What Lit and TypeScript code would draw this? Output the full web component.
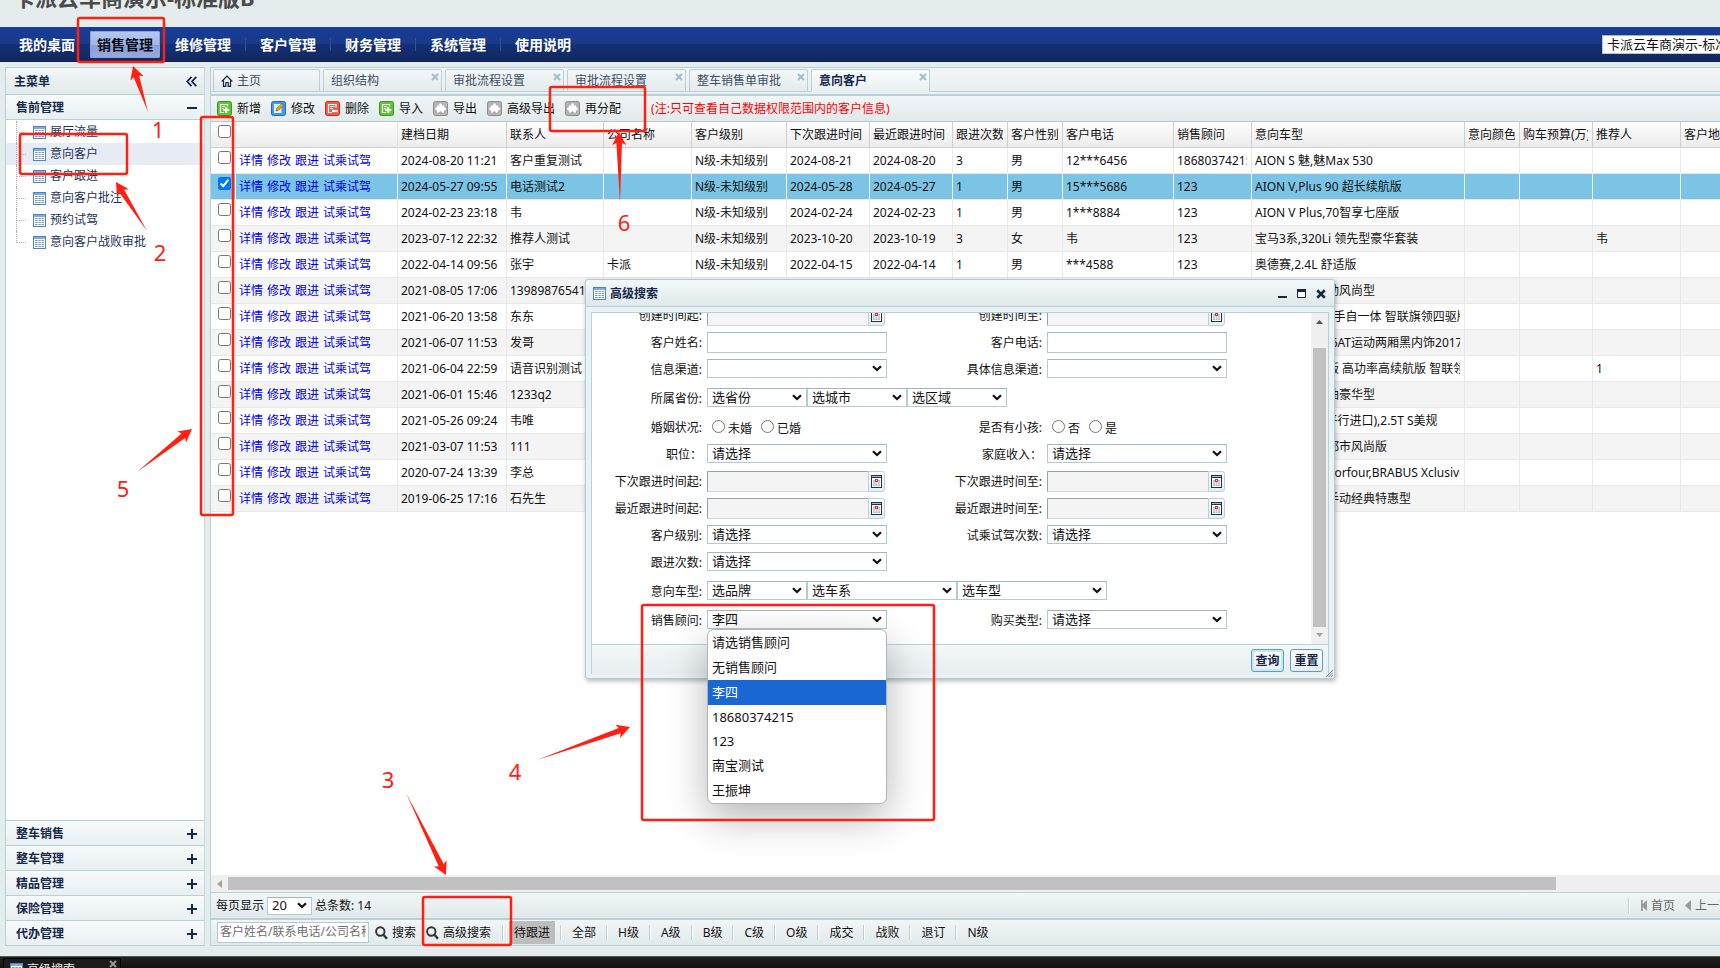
import { LitElement, html, css, svg, nothing } from "lit";
import { customElement, state } from "lit/decorators.js";
import { classMap } from "lit/directives/class-map.js";

type IconName = "add" | "edit" | "del" | "gear";

const NAV = ["我的桌面", "销售管理", "维修管理", "客户管理", "财务管理", "系统管理", "使用说明"];
const TREE = ["展厅流量", "意向客户", "客户跟进", "意向客户批注", "预约试驾", "意向客户战败审批"];
const GROUPS = ["整车销售", "整车管理", "精品管理", "保险管理", "代办管理"];
const TABS = ["组织结构", "审批流程设置", "审批流程设置", "整车销售单审批", "意向客户"];
const TOOLS: [IconName, string][] = [
  ["add", "新增"],
  ["edit", "修改"],
  ["del", "删除"],
  ["add", "导入"],
  ["gear", "导出"],
  ["gear", "高级导出"],
  ["gear", "再分配"],
];
const FILTERS = ["全部", "H级", "A级", "B级", "C级", "O级", "成交", "战败", "退订", "N级"];

const COLS: [string, number][] = [
  ["", 25],
  ["", 162],
  ["建档日期", 109],
  ["联系人", 97],
  ["公司名称", 88],
  ["客户级别", 95],
  ["下次跟进时间", 83],
  ["最近跟进时间", 83],
  ["跟进次数", 55],
  ["客户性别", 55],
  ["客户电话", 111],
  ["销售顾问", 78],
  ["意向车型", 213],
  ["意向颜色", 55],
  ["购车预算(万)", 73],
  ["推荐人", 88],
  ["客户地址", 120],
];
const TABLE_WIDTH = COLS.reduce((sum, col) => sum + col[1], 0);

const L = "N级-未知级别";
const ROWS: string[][] = [
  ["2024-08-20 11:21", "客户重复测试", "", L, "2024-08-21", "2024-08-20", "3", "男", "12***6456", "18680374215", "AION S 魅,魅Max 530", ""],
  ["2024-05-27 09:55", "电话测试2", "", L, "2024-05-28", "2024-05-27", "1", "男", "15***5686", "123", "AION V,Plus 90 超长续航版", ""],
  ["2024-02-23 23:18", "韦", "", L, "2024-02-24", "2024-02-23", "1", "男", "1***8884", "123", "AION V Plus,70智享七座版", ""],
  ["2023-07-12 22:32", "推荐人测试", "", L, "2023-10-20", "2023-10-19", "3", "女", "韦", "123", "宝马3系,320Li 领先型豪华套装", "韦"],
  ["2022-04-14 09:56", "张宇", "卡派", L, "2022-04-15", "2022-04-14", "1", "男", "***4588", "123", "奥德赛,2.4L 舒适版", ""],
  ["2021-08-05 17:06", "13989876541", "", "", "", "", "", "", "", "", "大众新朗逸自动风尚型", ""],
  ["2021-06-20 13:58", "东东", "", "", "", "", "", "", "", "", "新哈弗H6,2.0T手自一体 智联旗领四驱版", ""],
  ["2021-06-07 11:53", "发哥", "", "", "", "", "", "", "", "", "马自达3,2.0L, 6AT运动两厢黑内饰2017款", ""],
  ["2021-06-04 22:59", "语音识别测试", "", "", "", "", "", "", "", "", "小鹏汽车标准版 高功率高续航版 智联领航", "1"],
  ["2021-06-01 15:46", "1233q2", "", "", "", "", "", "", "", "", "福特新锐界汽油豪华型", ""],
  ["2021-05-26 09:24", "韦唯", "", "", "", "", "", "", "", "", "丰田凯美瑞3(平行进口),2.5T S美规", ""],
  ["2021-03-07 11:53", "111", "", "", "", "", "", "", "", "", "大众新桑塔纳都市风尚版", ""],
  ["2020-07-24 13:39", "李总", "", "", "", "", "", "", "", "", "新奔驰,smart forfour,BRABUS Xclusive", ""],
  ["2019-06-25 17:16", "石先生", "", "", "", "", "", "", "", "", "五菱宏光标准手动经典特惠型", ""],
];

type Field =
  | { label: string; kind: "date" | "text" }
  | { label: string; kind: "select"; values: [string, number][] }
  | { label: string; kind: "radio"; values: string[] };

const sel = (label: string, value = "请选择"): Field => ({ label, kind: "select", values: [[value, 180]] });

const FORM: { tall?: boolean; fields: Field[] }[] = [
  { fields: [{ label: "创建时间起:", kind: "date" }, { label: "创建时间至:", kind: "date" }] },
  { fields: [{ label: "客户姓名:", kind: "text" }, { label: "客户电话:", kind: "text" }] },
  { fields: [sel("信息渠道:", ""), sel("具体信息渠道:", "")] },
  { tall: true, fields: [{ label: "所属省份:", kind: "select", values: [["选省份", 100], ["选城市", 100], ["选区域", 100]] }] },
  {
    tall: true,
    fields: [
      { label: "婚姻状况:", kind: "radio", values: ["未婚", "已婚"] },
      { label: "是否有小孩:", kind: "radio", values: ["否", "是"] },
    ],
  },
  { fields: [sel("职位："), sel("家庭收入：")] },
  { fields: [{ label: "下次跟进时间起:", kind: "date" }, { label: "下次跟进时间至:", kind: "date" }] },
  { fields: [{ label: "最近跟进时间起:", kind: "date" }, { label: "最近跟进时间至:", kind: "date" }] },
  { fields: [sel("客户级别:"), sel("试乘试驾次数:")] },
  { fields: [sel("跟进次数:")] },
  { tall: true, fields: [{ label: "意向车型:", kind: "select", values: [["选品牌", 100], ["选车系", 150], ["选车型", 150]] }] },
  { tall: true, fields: [sel("销售顾问:", "李四"), sel("购买类型:")] },
];
const CONSULTANTS = ["请选销售顾问", "无销售顾问", "李四", "18680374215", "123", "南宝测试", "王振坤"];

const chevron = html`<svg class="chev" width="10" height="7" viewBox="0 0 10 7" aria-hidden="true">
  <path d="M1 1.2 5 5 9 1.2" fill="none" stroke="#111" stroke-width="2.2" />
</svg>`;

const gridIcon = html`<svg width="13" height="13" viewBox="0 0 13 13" aria-hidden="true">
  <rect x=".5" y=".5" width="12" height="12" fill="#fff" stroke="#4f83c8" />
  <path d="M1 1h11v2H1z" fill="#7fabe2" />
  <path d="M2 4.5h2.6M5.4 4.5h2.4M8.6 4.5H11M2 6.5h2.6M5.4 6.5h2.4M8.6 6.5H11M2 8.5h2.6M5.4 8.5h2.4M8.6 8.5H11M2 10.5h2.6M5.4 10.5h2.4M8.6 10.5H11" stroke="#7699c8" />
</svg>`;

const calendarIcon = html`<svg width="11" height="13" viewBox="0 0 11 13" aria-hidden="true">
  <rect x=".5" y=".5" width="10" height="12" fill="#fff" stroke="#1b3355" />
  <path d="M0 0h11v3H0z" fill="#1b3355" />
  <path d="M1 1.5h9" stroke="#9fc0d0" />
  <path d="M2 5h7v6H2z" fill="#a9bcc6" />
  <path d="M4.3 5v6M6.7 5v6M2 7h7M2 9h7" stroke="#fff" stroke-width=".6" />
  <path d="M4 4h3v3H4z" fill="#ff1f1f" /><path d="M5 5h1v1H5z" fill="#fff" />
</svg>`;

const magnifier = html`<svg width="13" height="14" viewBox="0 0 13 14" aria-hidden="true">
  <circle cx="5.3" cy="5.5" r="4.2" fill="none" stroke="#333" stroke-width="1.9" />
  <path d="m8.4 8.8 3.6 4" stroke="#333" stroke-width="2.4" />
</svg>`;

const TOOL_FILL: Record<IconName, [string, string]> = {
  add: ["#5fc43a", "#2f9a12"],
  edit: ["#3f9cf0", "#1769c8"],
  del: ["#ee5a4e", "#c8281e"],
  gear: ["#b4b4b4", "#8c8c8c"],
};

function toolIcon(name: IconName) {
  const [fill, stroke] = TOOL_FILL[name];
  const glyph = {
    add: svg`<path d="M10.5 5.2V3.5h-7v8h3.5" fill="none" stroke="#fff" stroke-width="1.2"/><path d="M5 5.5h3M5 7.5h2" stroke="#fff"/><path d="M9.3 6v6M6.3 9h6" stroke="#fff" stroke-width="2"/>`,
    edit: svg`<path d="M3 3h7.5v9H3z" fill="#e8f3ff"/><path d="m5 10 .6-2.4L10.8 2.4l1.8 1.8L7.4 9.4z" fill="#f0a020" stroke="#7a5410" stroke-width=".6"/>`,
    del: svg`<path d="M11 6.5V3.5H3.5v8H7" fill="none" stroke="#fff" stroke-width="1.2"/><path d="M5 5.5h4.5M5 7.5h3" stroke="#fff"/><path d="M7 10h5.5" stroke="#fff" stroke-width="2.2"/>`,
    gear: svg`<path d="M4 4.2h7v7.3H4z" fill="#fff"/><circle cx="7.5" cy="3.8" r="1.5" fill="#fff"/><circle cx="3.6" cy="7.8" r="1.5" fill="#fff"/><circle cx="11.4" cy="7.8" r="1.5" fill="#fff"/><circle cx="7.5" cy="11.5" r="1.2" fill="#a6a6a6"/><path d="M5.8 4.2v1M9.2 4.2v1" stroke="#a6a6a6" stroke-width=".7"/>`,
  }[name];
  return html`<svg width="15" height="15" viewBox="0 0 15 15" aria-hidden="true">
    <rect x=".5" y=".5" width="14" height="14" rx="2" fill=${fill} stroke=${stroke} />${glyph}
  </svg>`;
}

/* Tapered arrow: a point at the tail that widens up to the head. */
function arrow([tx, ty, sx, sy]: number[]) {
  const len = Math.hypot(tx - sx, ty - sy);
  const ux = (tx - sx) / len;
  const uy = (ty - sy) / len;
  const at = (back: number, side: number) =>
    `${(tx - ux * back - uy * side).toFixed(1)},${(ty - uy * back + ux * side).toFixed(1)}`;
  const points = [at(0, 0), at(13, 7), at(11, 2.8), `${sx},${sy}`, at(11, -2.8), at(13, -7)].join(" ");
  return svg`<polygon points=${points} fill="#ff2012"/>`;
}

const MARK_BOXES = [
  [78, 18, 86, 44],
  [20, 134, 107, 40],
  [201, 117, 32, 398],
  [550, 87, 95, 44],
  [423, 897, 88, 48],
  [642, 605, 292, 215],
];
const MARK_ARROWS = [
  [133, 66, 148, 112],
  [116, 182, 147, 231],
  [446, 875, 406, 793],
  [630, 727, 537, 760],
  [192, 429, 137, 472],
  [619, 132, 620, 203],
];
const MARK_TEXT: [string, number, number][] = [
  ["1", 158, 138],
  ["2", 160, 261],
  ["3", 388, 788],
  ["4", 515, 780],
  ["5", 123, 497],
  ["6", 624, 231],
];

@customElement("app-root")
export class AppRoot extends LitElement {
  @state() private selected = 1;

  static styles = css`
    :host {
      display: block;
      position: relative;
      height: 100vh;
      overflow: hidden;
      background: #e5ecee;
      color: #111;
      font: 12px/18px "Noto Sans", "Noto Sans CJK SC", sans-serif;
    }
    * { box-sizing: border-box; }
    button, input, select { font: inherit; color: inherit; margin: 0; }
    button { border: 0; background: none; padding: 0; white-space: nowrap; }
    svg { display: block; flex: none; }
    .page { display: flex; flex-direction: column; height: 100%; }
    .brand { height: 27px; flex: none; overflow: hidden; }
    .brand h1 { margin: -19px 0 0 13px; font-size: 22px; line-height: 32px; font-weight: 700; color: #4b4b4b; }
    .nav {
      display: flex; align-items: center; height: 35px; flex: none; padding-left: 12px;
      background: linear-gradient(#173d9c, #1a3a86 48%, #14307a 50%, #12275c);
      border-bottom: 1px solid #0e1d55;
    }
    .nav button { width: 70px; height: 27px; font-size: 14px; line-height: 27px; font-weight: 700; color: #fff; text-align: center; border-radius: 2px; }
    .nav .on { margin: 0 8px; color: #0a0a14; background: linear-gradient(#b4caf4, #a3b6e4 50%, #8d9fd4 52%, #96a8dc); box-shadow: inset 0 0 0 1px #8ea0d6; }
    .nav .sep { width: 1px; height: 13px; margin: 0 7px; background: #33508f; }
    .org { margin: 0 -82px 0 auto; }
    .cell { display: inline-grid; align-items: center; }
    .cell > * { grid-area: 1 / 1; }
    .chev { justify-self: end; margin-right: 5px; pointer-events: none; }
    select { appearance: none; width: 100%; height: 19px; font-size: 13px; line-height: 15px; padding: 0 16px 0 4px; background: #fff; border: 1px solid #b0cbd3; border-top-color: #9db8c0; border-radius: 0; outline: 0; }
    .org select { width: 200px; }

    .work { display: flex; flex: 1; min-height: 0; gap: 5px; padding: 5px 0 10px 5px; }
    .side { width: 200px; flex: none; display: flex; flex-direction: column; background: #fff; border: 1px solid #b8d0d6; border-right-color: #c5d9de; color: #15284b; }
    .bar { display: flex; align-items: center; justify-content: space-between; height: 25px; padding: 1px 7px 0 10px; font-weight: 700; background: linear-gradient(#f7fafb, #e9f0f1); border-bottom: 1px solid #b8d0d6; width: 100%; }
    .side > .head { height: 27px; padding-left: 8px; background: linear-gradient(#f2f6f7, #e2eaec); }
    .side .tree { flex: 1; list-style: none; margin: 0; padding: 1px 0 0; min-height: 0; }
    .tree li { height: 22px; display: grid; grid-template-columns: 10px 1fr; padding-left: 10px; }
    .tree .twig { border-left: 1px dotted #aab; background: linear-gradient(90deg, #b5b5b5 1px, transparent 1px) 0 11px / 2px 1px repeat-x; }
    .tree li:last-child .twig { height: 12px; }
    .tree a { display: flex; align-items: center; gap: 4px; padding-left: 7px; color: #1c3358; text-decoration: none; line-height: 22px; }
    .tree .on { background: #e6ebf4; }
    .tail .bar { border-bottom: 0; border-top: 1px solid #b8d0d6; }

    .main { flex: 1; min-width: 0; display: flex; flex-direction: column; border: 1px solid #b8d0d6; border-right: 0; background: #fff; }
    .tabs { display: flex; gap: 3px; align-items: flex-end; height: 24px; padding-left: 2px; flex: none; background: linear-gradient(#f1f5f7, #e9eef1); box-shadow: inset 0 -1px #b8d0d6; }
    .tab { display: flex; justify-content: space-between; width: 119px; height: 23px; padding: 0 0 0 7px; border: 1px solid #b8d0d6; border-radius: 2px 2px 0 0; background: linear-gradient(#f3f7f8, #e3ebed); color: #3c4e62; line-height: 21px; }
    .tab button { line-height: 21px; }
    .tab .x { align-self: flex-start; padding: 3px 2px; }
    .tab.home { width: 107px; }
    .tab.home button { display: flex; align-items: center; gap: 4px; }
    .tab.on { border-bottom-color: #eaf0f2; background: linear-gradient(#fafcfc, #eaf0f2); font-weight: 700; color: #15284b; }
    .under { height: 4px; flex: none; background: #eaf0f2; border-bottom: 2px solid #b8d0d6; }
    .tools { display: flex; align-items: center; gap: 10px; height: 26px; flex: none; padding: 0 6px; background: linear-gradient(#f1f6f7, #e1e9ea); border-bottom: 1px solid #b8c8cc; }
    .tools button { display: flex; align-items: center; gap: 5px; }
    .note { color: #ff0000; margin-left: 20px; white-space: nowrap; }

    .gridwrap { flex: 1; min-height: 0; overflow: hidden; }
    table { table-layout: fixed; border-collapse: separate; border-spacing: 0; }
    th, td { height: 26px; padding: 0 4px 0 3px; white-space: nowrap; text-align: left; font-weight: 400; border-right: 1px solid #e9e9e9; border-bottom: 1px solid #e9e9e9; }
    .clip { overflow: hidden; }
    th { background: linear-gradient(#fdfdfd, #ececec); border-color: #cfcfcf; }
    th:first-child, th:nth-child(2) { border-right-color: #e4e4e4; }
    td:first-child, th:first-child { vertical-align: top; padding: 3px 0 0 7px; }
    tr:nth-child(even) td { background: #f4f4f4; }
    tbody .sel td { background: #7bc4e5; border-right-color: #eef5f8; }
    td input, th input { display: block; width: 13px; height: 13px; }
    .acts { display: flex; gap: 4px; }
    .acts a { color: #0000ee; text-decoration: none; }

    .hscroll { height: 17px; flex: none; display: flex; align-items: center; background: #f0f0f0; padding: 0 164px 0 6px; }
    .hscroll .thumb { height: 13px; flex: 1; margin-left: 6px; background: #c1c1c1; }
    .pager { display: flex; align-items: center; height: 28px; flex: none; padding-left: 5px; background: linear-gradient(#f1f6f7, #e1e9ea); border-top: 1px solid #b8d0d6; border-bottom: 2px solid #b8d0d6; white-space: nowrap; }
    .pager .cell { width: 45px; margin: 0 3px; }
    .pager select { height: 18px; }
    .pages { display: flex; align-items: center; margin-left: auto; width: 92px; overflow: hidden; color: #666; }
    .pages button { display: flex; align-items: center; gap: 4px; margin-right: 10px; }
    .sep2 { width: 2px; height: 15px; flex: none; background: linear-gradient(90deg, #b8d0d6 50%, #fff 50%); }
    .pages .sep2 { margin-right: 11px; }
    .find { display: flex; align-items: center; height: 25px; flex: none; padding-left: 6px; background: linear-gradient(#f1f6f7, #e1e9ea); }
    .find input { width: 152px; height: 21px; padding: 0 2px 2px; border: 1px solid #b0cbd3; outline: 0; background: #fff; border-radius: 0; }
    .find input::placeholder { color: #707070; opacity: 1; }
    .find button { display: flex; align-items: center; gap: 4px; }
    .find .go { margin-left: 6px; margin-right: 4px; }
    .find .adv { margin-right: 11px; }
    .find .opt { padding: 0 10px; height: 22px; }
    .find .pend { margin: 0 5px; padding: 0 5px; width: 46px; height: 23px; background: #bdbdbd; justify-content: center; }

    .dock { height: 12px; flex: none; background: linear-gradient(#222, #111); border-top: 1px solid #555; padding: 1px 0 0 3px; overflow: hidden; }
    .dock button { display: flex; align-items: flex-start; gap: 4px; width: 118px; height: 24px; padding: 4px 3px 0 6px; color: #eee; background: #1c1c1c; border: 1px solid #000; border-radius: 2px; line-height: 14px; }
    .dock .x { margin: -3px 0 0 auto; }

    .dialog { position: absolute; left: 585px; top: 279px; width: 750px; display: flex; flex-direction: column; background: #e9f2f4; border: 1px solid #b0cdd6; border-radius: 3px; box-shadow: 1px 2px 5px rgba(0, 0, 0, .3); }
    .dialog header { display: flex; align-items: center; gap: 4px; height: 27px; padding: 1px 8px 0 7px; font-weight: 700; color: #15284b; background: linear-gradient(#f4f8f9, #dfe8ea); border-bottom: 1px solid #b8d0d6; border-radius: 3px 3px 0 0; }
    .dialog header h2 { margin: 0 auto 0 0; font: inherit; }
    .dialog header button { margin-left: 6px; }
    .shell { margin: 5px 5px 4px; border: 1px solid #b8d0d6; border-bottom: 0; display: grid; grid-template-columns: 1fr 17px; }
    .scroll { height: 331px; overflow: hidden; background: #fff; }
    .rows { margin-top: -11px; }
    .row { display: grid; grid-template-columns: 110px 230px 110px 1fr; column-gap: 0; height: 27px; padding-top: 3px; }
    .row.tall { height: 29px; padding-top: 5px; }
    .row .cap { text-align: right; line-height: 21px; white-space: nowrap; }
    .row .wide { grid-column: 2 / -1; }
    .ctl { display: flex; align-items: flex-start; padding-left: 5px; }
    .txt { width: 180px; height: 21px; border: 1px solid #b0cbd3; border-top-color: #9db8c0; background: #fff; outline: 0; border-radius: 0; }
    .date { width: 161px; height: 21px; border: 1px solid #d3d9dc; border-top-color: #98a4ac; border-left-color: #98a4ac; border-right: 0; background: #f4f4f4; outline: 0; border-radius: 0; }
    .cal { width: 17px; height: 21px; display: grid; place-content: center; border: 1px solid #b8d0d6; border-radius: 0 3px 3px 0; background: linear-gradient(#fff, #e6eef1); }
    .ctl.radios { padding: 3px 0 0 10px; }
    .radios label { display: flex; gap: 3px; margin-right: 9px; line-height: 18px; }
    .radios input { width: 13px; height: 13px; }
    .vscroll { display: flex; flex-direction: column; align-items: center; justify-content: space-between; background: #f0f0f0; padding: 7px 2px 7px; }
    .vscroll .thumb { flex: 1; width: 13px; margin: 24px 0 6px; background: #c1c1c1; }
    .foot { grid-column: 1 / -1; height: 30px; display: flex; justify-content: flex-end; align-items: center; gap: 6px; padding: 2px 5px 0 0; border-top: 1px solid #b8d0d6; background: linear-gradient(#f3f7f8, #e7edf1); }
    .foot button { width: 33px; height: 23px; border: 1px solid #5b9fbb; border-radius: 3px; background: linear-gradient(#fff, #e6edf3); color: #15284b; font-weight: 700; line-height: 19px; }
    .foot .def { box-shadow: inset 0 0 0 2px #c4ebf5; }
    .grip { position: absolute; right: 1px; bottom: 1px; }
    .menu { position: absolute; left: 708px; top: 630px; width: 178px; margin: 0; padding: 0; list-style: none; background: #fff; border-radius: 6px; overflow: hidden; font-size: 13px; }
    .menushadow { position: absolute; left: 708px; top: 630px; width: 178px; height: 173px; border-radius: 6px; box-shadow: 0 0 0 1px #b4b4b4, 0 14px 40px rgba(0, 0, 0, .3); }
    .menu li { height: 25px; line-height: 25px; padding: 0 4px; }
    .menu .num { height: 24px; line-height: 24px; }
    .menu .on { background: #1967d2; color: #fff; }
    .marks { position: absolute; left: 0; top: 0; width: 100%; height: 100%; pointer-events: none; }
    .marks text { font-size: 22px; fill: #ff2012; text-anchor: middle; }
  `;

  private select(id: string, value: string, width?: number) {
    return html`<span class="cell" style=${width ? `width:${width}px` : nothing}>
      <select id=${id}><option>${value}</option></select>${chevron}
    </span>`;
  }

  private field(f: Field, id: string) {
    if (f.kind === "radio") {
      return html`<span class="cap">${f.label}</span>
        <div class="ctl radios" role="radiogroup" aria-label=${f.label}>
          ${f.values.map((v) => html`<label><input type="radio" name=${id} />${v}</label>`)}
        </div>`;
    }
    const cap = html`<label class="cap" for=${f.kind === "select" ? id + "-0" : id}>${f.label}</label>`;
    if (f.kind === "select") {
      return html`${cap}
        <div class=${classMap({ ctl: true, wide: f.values.length > 1 })}>
          ${f.values.map(([v, w], i) => this.select(`${id}-${i}`, v, w))}
        </div>`;
    }
    return f.kind === "text"
      ? html`${cap}<div class="ctl"><input class="txt" id=${id} type="text" /></div>`
      : html`${cap}<div class="ctl"><input class="date" id=${id} type="text" readonly /><button class="cal" aria-label="日期">${calendarIcon}</button></div>`;
  }

  private cross(color: string, size = 7) {
    return html`<svg width=${size} height=${size} viewBox="0 0 8 8" aria-hidden="true">
      <path d="m1 1 6 6M7 1 1 7" stroke=${color} stroke-width="2" />
    </svg>`;
  }

  private sign(plus: boolean) {
    return html`<svg width="10" height="10" viewBox="0 0 10 10" aria-hidden="true">
      <path d=${plus ? "M0 5h10M5 0v10" : "M0 5h10"} stroke="#15284b" stroke-width="2" />
    </svg>`;
  }

  private sidebar() {
    return html`<aside class="side">
      <div class="bar head">
        <span>主菜单</span>
        <svg width="11" height="11" viewBox="0 0 11 11" aria-hidden="true">
          <path d="M5.5 .8 1.2 5.5l4.3 4.7M10.3 .8 6 5.5l4.3 4.7" fill="none" stroke="#15284b" stroke-width="1.8" />
        </svg>
      </div>
      <button class="bar">售前管理${this.sign(false)}</button>
      <ul class="tree">
        ${TREE.map((t, i) => html`<li class=${classMap({ on: i === 1 })}><span class="twig"></span><a href="#">${gridIcon}${t}</a></li>`)}
      </ul>
      <div class="tail">${GROUPS.map((g) => html`<button class="bar">${g}${this.sign(true)}</button>`)}</div>
    </aside>`;
  }

  private table() {
    return html`<div class="gridwrap">
      <table style=${`width:${TABLE_WIDTH}px`}>
        <colgroup>${COLS.map(([, w]) => html`<col style=${`width:${w}px`} />`)}</colgroup>
        <thead>
          <tr>${COLS.map(([t], i) => html`<th>${i === 0 ? html`<input type="checkbox" aria-label="全选" />` : html`<div class="clip">${t}</div>`}</th>`)}</tr>
        </thead>
        <tbody>
          ${ROWS.map((r, i) => html`<tr class=${classMap({ sel: i === this.selected })}>
            <td><input type="checkbox" aria-label=${r[1]} .checked=${i === this.selected} @change=${() => (this.selected = i)} /></td>
            <td><span class="acts"><a href="#">详情</a><a href="#">修改</a><a href="#">跟进</a><a href="#">试乘试驾</a></span></td>
            ${r.slice(0, 11).map((c) => html`<td><div class="clip">${c}</div></td>`)}
            <td></td><td></td><td>${r[11]}</td><td></td>
          </tr>`)}
        </tbody>
      </table>
    </div>`;
  }

  private dialog() {
    return html`<section class="dialog" role="dialog" aria-label="高级搜索">
        <header>
          ${gridIcon}<h2>高级搜索</h2>
          <button aria-label="最小化"><svg width="9" height="9" viewBox="0 0 9 9"><path d="M0 8h9" stroke="#15284b" stroke-width="2" /></svg></button>
          <button aria-label="最大化"><svg width="9" height="9" viewBox="0 0 9 9"><path d="M.5 1h8v7.5h-8z" fill="#fff" stroke="#15284b" /><path d="M0 1.5h9" stroke="#15284b" stroke-width="3" /></svg></button>
          <button aria-label="关闭">${this.cross("#15284b", 10)}</button>
        </header>
        <div class="shell">
          <div class="scroll"><div class="rows">
            ${FORM.map((row, i) => html`<div class=${classMap({ row: true, tall: !!row.tall })}>
              ${row.fields.map((f, j) => this.field(f, `f${i}${j}`))}
            </div>`)}
          </div></div>
          <div class="vscroll">
            <svg width="7" height="4" viewBox="0 0 7 4"><path d="M0 4 3.5 0 7 4z" fill="#505050" /></svg>
            <div class="thumb"></div>
            <svg width="7" height="4" viewBox="0 0 7 4"><path d="M0 0 3.5 4 7 0z" fill="#a3a3a3" /></svg>
          </div>
          <div class="foot"><button class="def">查询</button><button>重置</button></div>
        </div>
        <svg class="grip" width="7" height="7" viewBox="0 0 7 7"><path d="M0 7 7 0M2.5 7 7 2.5M5 7l2-2" stroke="#666" stroke-dasharray="1 .5" /></svg>
      </section>
      <div class="menushadow"></div>
      <ul class="menu" role="listbox" aria-label="销售顾问">
        ${CONSULTANTS.map((c) => html`<li role="option" aria-selected=${c === "李四" ? "true" : "false"} class=${classMap({ on: c === "李四", num: /^\d+$/.test(c) })}>${c}</li>`)}
      </ul>`;
  }

  render() {
    return html`<div class="page">
        <div class="brand"><h1>卡派云车商演示-标准版B</h1></div>
        <nav class="nav">
          ${NAV.map((n, i) => html`${i > 2 ? html`<span class="sep"></span>` : nothing}<button class=${classMap({ on: i === 1 })}>${n}</button>`)}
          <span class="org cell">
            <select aria-label="门店"><option>卡派云车商演示-标准版B</option></select>${chevron}
          </span>
        </nav>
        <div class="work">
          ${this.sidebar()}
          <main class="main">
            <div class="tabs">
              <div class="tab home"><button>
                <svg width="12" height="12" viewBox="0 0 12 12"><path d="M.7 6.5 6 1l5.3 5.5M2.5 5.5v5.8h2.3V7.5h2.4v3.8h2.3V5.5" fill="none" stroke="#15284b" stroke-width="1.2" /></svg>主页
              </button></div>
              ${TABS.map((t, i) => html`<div class=${classMap({ tab: true, on: i === 4 })}>
                <button>${t}</button><button class="x" aria-label="关闭">${this.cross("#9fbfc8", 8)}</button>
              </div>`)}
            </div>
            <div class="under"></div>
            <div class="tools">
              ${TOOLS.map(([k, t]) => html`<button>${toolIcon(k)}${t}</button>`)}
              <span class="note">(注:只可查看自己数据权限范围内的客户信息)</span>
            </div>
            ${this.table()}
            <div class="hscroll">
              <svg width="5" height="8" viewBox="0 0 5 8"><path d="M5 0 0 4l5 4z" fill="#a3a3a3" /></svg>
              <div class="thumb"></div>
            </div>
            <div class="pager">
              <label for="size">每页显示</label>${this.select("size", "20")}<span>总条数: 14</span>
              <div class="pages">
                <span class="sep2"></span>
                <button><svg width="6" height="11" viewBox="0 0 6 11"><path d="M0 0h1.8v4L6 0v11L1.8 7v4H0z" fill="#9a9a9a" /></svg>首页</button>
                <button><svg width="6" height="11" viewBox="0 0 6 11"><path d="M6 0v11L0 5.5z" fill="#9a9a9a" /></svg>上一页</button>
              </div>
            </div>
            <div class="find">
              <input type="text" aria-label="关键字" placeholder="客户姓名/联系电话/公司名称" />
              <button class="go">${magnifier}搜索</button>
              <button class="go adv">${magnifier}高级搜索</button>
              <span class="sep2"></span>
              <button class="pend">待跟进</button>
              ${FILTERS.map((f) => html`<span class="sep2"></span><button class="opt">${f}</button>`)}
            </div>
          </main>
        </div>
        <div class="dock"><button>${gridIcon}高级搜索<span class="x">${this.cross("#999", 8)}</span></button></div>
      </div>
      ${this.dialog()}
      <svg class="marks" aria-hidden="true">
        ${MARK_BOXES.map(([x, y, w, h]) => svg`<rect x=${x} y=${y} width=${w} height=${h} rx="2" fill="none" stroke="#ff2012" stroke-width="2.5"/>`)}
        ${MARK_ARROWS.map(arrow)}
        ${MARK_TEXT.map(([t, x, y]) => svg`<text x=${x} y=${y}>${t}</text>`)}
      </svg>`;
  }
}
